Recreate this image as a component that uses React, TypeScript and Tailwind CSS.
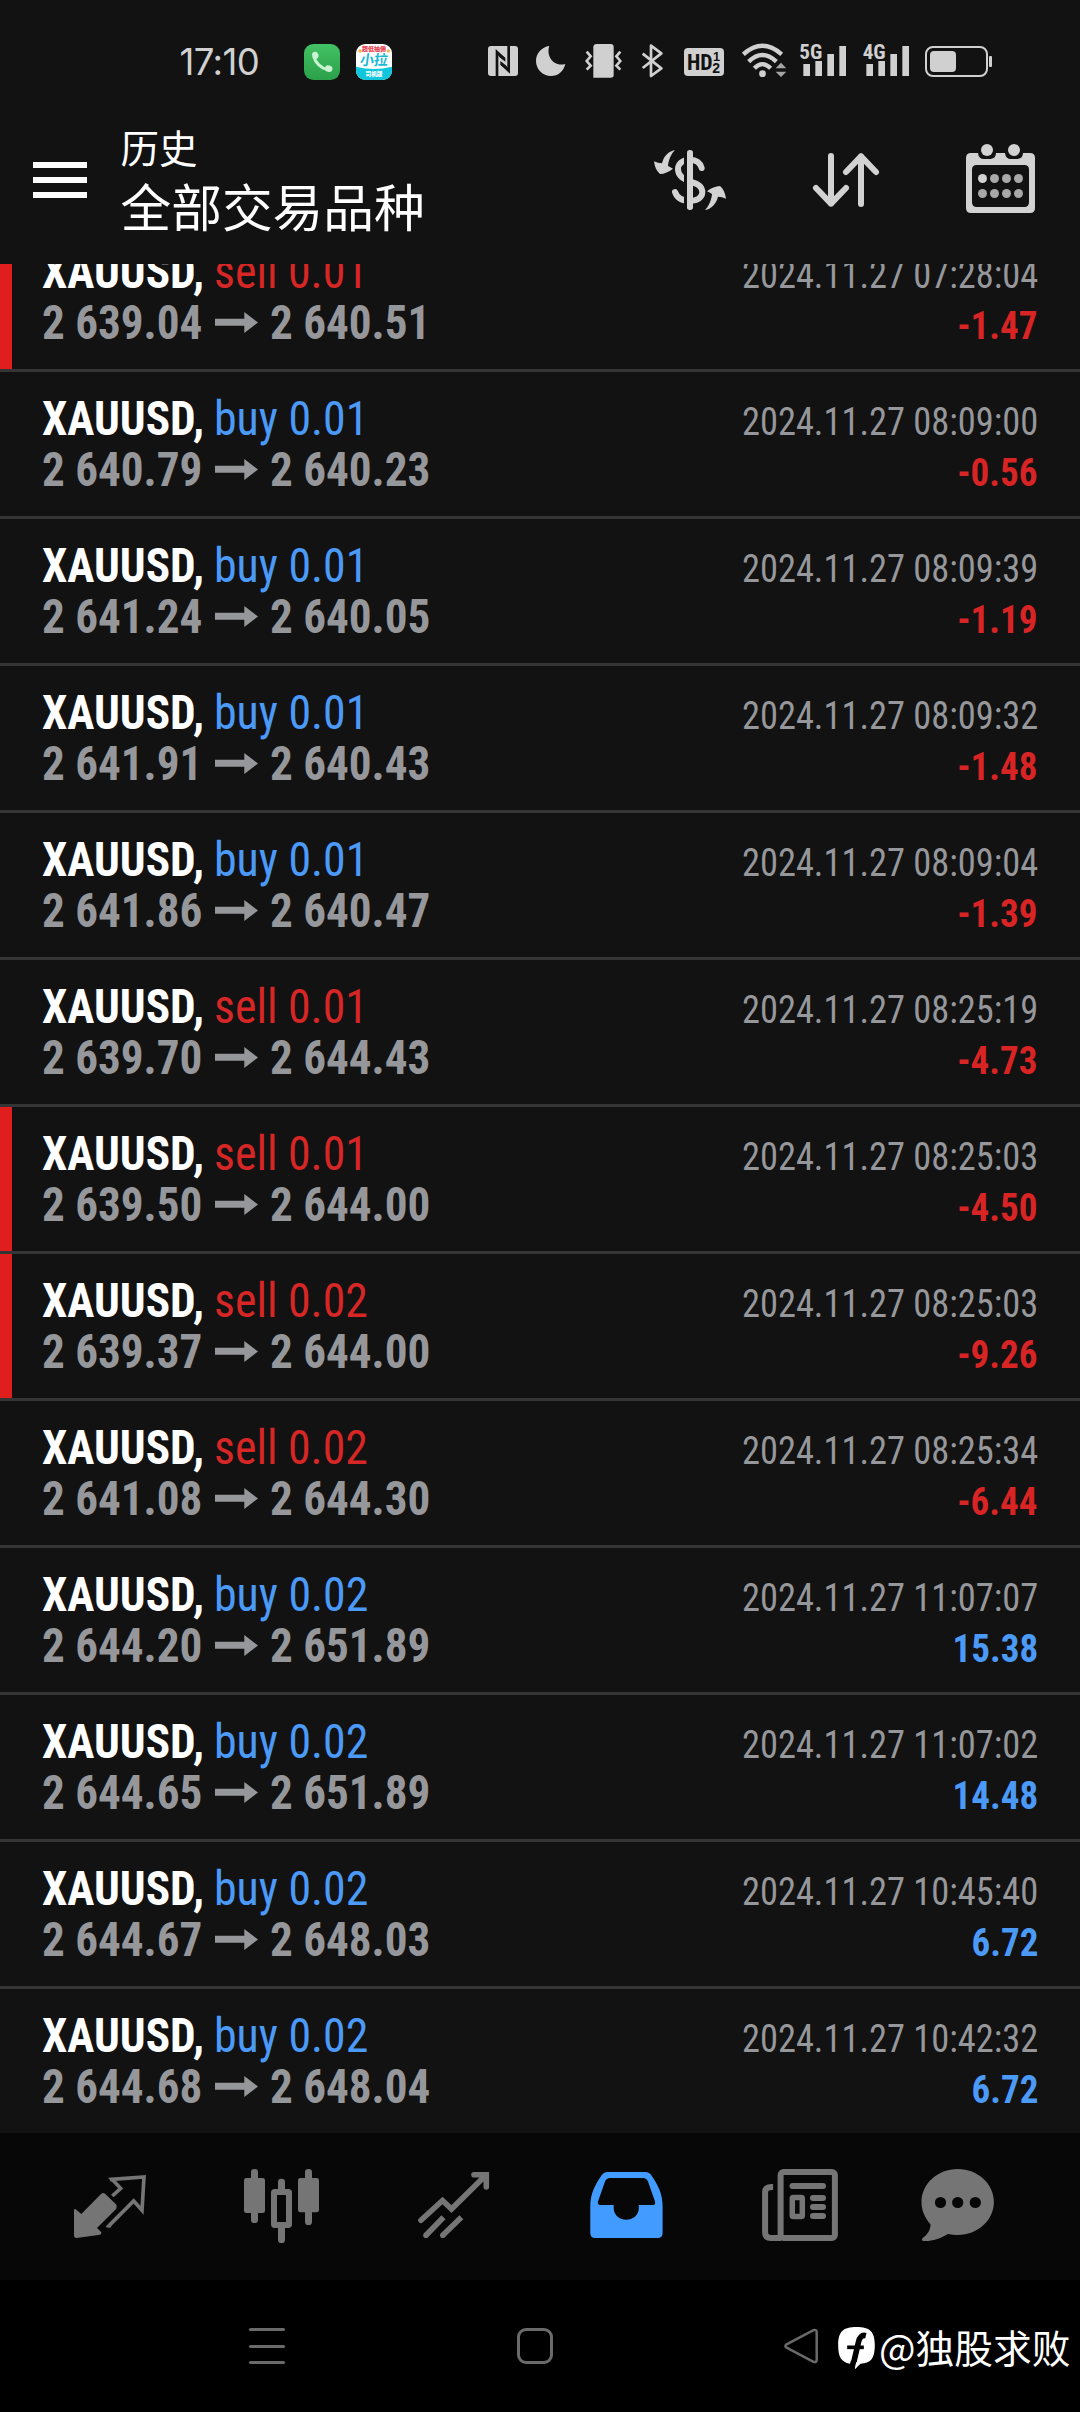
type Side = "buy" | "sell";

interface Deal {
  side: Side;
  lot: string;
  open: string;
  close: string;
  time: string;
  profit: string;
  marked?: boolean;
}

const deals: Deal[] = [
  { side: "sell", lot: "0.01", open: "2 639.04", close: "2 640.51", time: "2024.11.27 07:28:04", profit: "-1.47", marked: true },
  { side: "buy", lot: "0.01", open: "2 640.79", close: "2 640.23", time: "2024.11.27 08:09:00", profit: "-0.56" },
  { side: "buy", lot: "0.01", open: "2 641.24", close: "2 640.05", time: "2024.11.27 08:09:39", profit: "-1.19" },
  { side: "buy", lot: "0.01", open: "2 641.91", close: "2 640.43", time: "2024.11.27 08:09:32", profit: "-1.48" },
  { side: "buy", lot: "0.01", open: "2 641.86", close: "2 640.47", time: "2024.11.27 08:09:04", profit: "-1.39" },
  { side: "sell", lot: "0.01", open: "2 639.70", close: "2 644.43", time: "2024.11.27 08:25:19", profit: "-4.73" },
  { side: "sell", lot: "0.01", open: "2 639.50", close: "2 644.00", time: "2024.11.27 08:25:03", profit: "-4.50", marked: true },
  { side: "sell", lot: "0.02", open: "2 639.37", close: "2 644.00", time: "2024.11.27 08:25:03", profit: "-9.26", marked: true },
  { side: "sell", lot: "0.02", open: "2 641.08", close: "2 644.30", time: "2024.11.27 08:25:34", profit: "-6.44" },
  { side: "buy", lot: "0.02", open: "2 644.20", close: "2 651.89", time: "2024.11.27 11:07:07", profit: "15.38" },
  { side: "buy", lot: "0.02", open: "2 644.65", close: "2 651.89", time: "2024.11.27 11:07:02", profit: "14.48" },
  { side: "buy", lot: "0.02", open: "2 644.67", close: "2 648.03", time: "2024.11.27 10:45:40", profit: "6.72" },
  { side: "buy", lot: "0.02", open: "2 644.68", close: "2 648.04", time: "2024.11.27 10:42:32", profit: "6.72" },
];

function DealRow({ deal }: { deal: Deal }) {
  return (
    <div className="flex h-[147px] shrink-0 border-b-[3px] border-[#353535] font-['Roboto_Condensed','Roboto',sans-serif]">
      <div className={deal.marked ? "w-3 bg-[#e01e1e]" : "w-3"} />
      <div className="flex flex-1 justify-between pl-[29.5px] pr-[42px]">
        <div className="pt-[21px] text-[48px] leading-[51px] whitespace-pre">
          <div className="flex">
            <span className="w-[172px] origin-left scale-x-[0.943] font-bold text-white">XAUUSD,</span>
            <span
              className={
                deal.side === "buy"
                  ? "inline-block origin-left scale-x-[0.955] text-[#4c9af8]"
                  : "inline-block origin-left scale-x-[0.955] text-[#d62626]"
              }
            >
              {deal.side} {deal.lot}
            </span>
          </div>
          <div className="flex items-center font-bold text-[#96979b]">
            <span className="w-[173px] origin-left scale-x-[0.94]">{deal.open}</span>
            <svg className="h-[21px] w-[43px]" viewBox="0 0 43 21" fill="currentColor">
              <path d="M0 6.7H29.3V0L43 10.5 29.3 21V13.7H0z" />
            </svg>
            <span className="ml-3 origin-left scale-x-[0.94]">{deal.close}</span>
          </div>
        </div>
        <div className="flex flex-col items-end pt-[25px] text-[39px] leading-[51px] whitespace-pre">
          <span className="origin-right scale-x-[0.934] text-[#96979b]">{deal.time}</span>
          <span
            className={
              deal.profit.startsWith("-")
                ? "origin-right scale-x-[0.95] font-bold text-[#d82424]"
                : "origin-right scale-x-[0.95] font-bold text-[#4c9af8]"
            }
          >
            {deal.profit}
          </span>
        </div>
      </div>
    </div>
  );
}

function StatusBar() {
  return (
    <div className="flex h-[112px] shrink-0 items-center pt-3 pl-[179.5px] text-[#d0d0d0]">
      <span className="w-[124.5px] font-['Inter',sans-serif] text-[36.5px] leading-[44px] tracking-[-0.6px]">17:10</span>
      {/* phone */}
      <svg className="h-9 w-9" viewBox="0 0 108 108">
        <defs>
          <linearGradient id="call" x1="0" y1="0" x2="0" y2="1">
            <stop offset="0" stopColor="#43c264" />
            <stop offset="1" stopColor="#2ba04a" />
          </linearGradient>
        </defs>
        <rect width="108" height="108" rx="28" fill="url(#call)" />
        <path d="M29 37C34 56 51 73 71 77" fill="none" stroke="#c9f3d2" strokeWidth="9" />
        <ellipse cx="34" cy="34" rx="9.5" ry="11" fill="#c9f3d2" transform="rotate(-15 34 34)" />
        <ellipse cx="74" cy="74" rx="11.5" ry="9.5" fill="#c9f3d2" transform="rotate(15 74 74)" />
      </svg>
      {/* driver app */}
      <svg className="ml-4 h-9 w-9" viewBox="0 0 108 108">
        <clipPath id="app"><rect width="108" height="108" rx="28" /></clipPath>
        <g clipPath="url(#app)" fontFamily="Noto Sans CJK SC, sans-serif" textAnchor="middle">
          <rect width="108" height="108" fill="#fff" />
          <path d="M0 68Q54 82 108 68V108H0z" fill="#10c6dc" />
          <circle cx="12" cy="21" r="5" fill="#f6b34c" />
          <circle cx="97" cy="21" r="5" fill="#f6b34c" />
          <text x="54" y="22" fontSize="18" fontWeight="900" fill="#e8404e">超低抽佣</text>
          <text x="54" y="63" fontSize="42" fontWeight="700" fill="#19b9d2" transform="skewX(-8) translate(7 0)">小拉</text>
          <text x="54" y="97" fontSize="17" fontWeight="900" fill="#fff">司机版</text>
        </g>
      </svg>
      {/* NFC */}
      <svg className="ml-24 h-10 w-[30px]" viewBox="84 36 90 120">
        <rect x="84" y="48" width="90" height="90" rx="9" fill="currentColor" />
        <path d="M111 138V66L133 87M146 48V122L124 101" fill="none" stroke="#121212" strokeWidth="8" />
        <path d="M107 61L136 84V95L118 81M150 127L121 104V93L139 107" fill="#121212" />
      </svg>
      {/* moon */}
      <svg className="ml-[18px] h-10 w-[30px]" viewBox="228 36 90 120" fill="currentColor">
        <path d="M268 48C258 76 279 112 316 102C311 124 294 138 273 138C248 138 228 118 228 93C228 70 245 51 268 48z" />
      </svg>
      {/* vibrate */}
      <svg className="ml-[19px] h-10 w-[37px]" viewBox="375 36 111 120">
        <path d="M411 42H452Q461 42 461 51V135Q461 143 452 143H400V52Q400 42 411 42z" fill="currentColor" />
        <path d="M380 65L392 79 380 93 392 107 380 119M481 65L469 79 481 93 469 107 481 119" fill="none" stroke="currentColor" strokeWidth="8" />
      </svg>
      {/* bluetooth */}
      <svg className="ml-[19px] h-10 w-[22px]" viewBox="543 36 66 120">
        <path d="M548 71L604 115 573 138V47L604 70 548 114" fill="none" stroke="currentColor" strokeWidth="8" strokeLinejoin="round" />
      </svg>
      {/* HD voice */}
      <svg className="ml-[21px] h-10 w-10" viewBox="672 36 120 120">
        <rect x="672" y="54" width="120" height="84" rx="12" fill="currentColor" />
        <g fill="#121212" fontWeight="700">
          <text x="681" y="120" fontSize="67" fontFamily="Roboto Condensed, sans-serif" textLength="77" lengthAdjust="spacingAndGlyphs">HD</text>
          <text x="759" y="92" fontSize="38" fontFamily="Liberation Sans, sans-serif">1</text>
          <text x="757" y="128" fontSize="42" fontFamily="Liberation Sans, sans-serif">2</text>
        </g>
      </svg>
      {/* wifi */}
      <svg className="ml-[18px] h-10 w-11" viewBox="36 36 132 120">
        <g fill="none" stroke="currentColor" strokeWidth="13">
          <path d="M40 73Q97 22 155 73" />
          <path d="M56 95Q97 55 139 95" />
          <path d="M73 115Q97 90 122 115" />
        </g>
        <circle cx="97.500" cy="131" r="10" fill="currentColor" />
        <path d="M153 98L169 115H137zM153 141L169 125H137z" fill="#a5a5a5" />
      </svg>
      {/* signal */}
      <svg className="ml-[14px] h-10 w-[47px]" viewBox="210 36 141 120" fill="currentColor">
        <text x="208" y="87" fontSize="61" fontWeight="700" fontFamily="Roboto Condensed, sans-serif" textLength="69" lengthAdjust="spacingAndGlyphs">5G</text>
        <path d="M220 102h20v36h-20zM256 93h20v45h-20zM292 72h20v66h-20zM328 48h20v90h-20z" />
      </svg>
      <svg className="ml-[15px] h-10 w-12" viewBox="396 36 144 120" fill="currentColor">
        <text x="398" y="87" fontSize="61" fontWeight="700" fontFamily="Roboto Condensed, sans-serif" textLength="69" lengthAdjust="spacingAndGlyphs">4G</text>
        <path d="M409 102h20v36h-20zM445 93h20v45h-20zM481 72h20v66h-20zM517 48h20v90h-20z" />
      </svg>
      {/* battery */}
      <svg className="ml-[14px] h-10 w-[69px]" viewBox="582 36 207 120">
        <rect x="588" y="51" width="183" height="87" rx="21" fill="none" stroke="currentColor" strokeWidth="6" />
        <rect x="600" y="63" width="78" height="63" rx="12" fill="currentColor" />
        <rect x="777" y="78" width="9" height="33" rx="3" fill="currentColor" />
      </svg>
    </div>
  );
}

function Header() {
  return (
    <div className="flex h-[152px] shrink-0 items-center pb-4 pl-[33px] text-[#d2d2d2]">
      <div className="flex w-[54px] flex-col gap-[9px]">
        <div className="h-1.5 bg-white" />
        <div className="h-1.5 bg-white" />
        <div className="h-1.5 bg-white" />
      </div>
      <div className="ml-[33.500px] flex w-[521.5px] flex-col gap-[5px] pb-[3px] font-['Noto_Sans_CJK_SC',sans-serif] text-white">
        <span className="text-[38.5px] leading-[48px]">历史</span>
        <span className="text-[50.7px] leading-[60px]">全部交易品种</span>
      </div>
      <svg className="size-24" viewBox="6 6 288 288">
        <path
          d="M185 114C180 96 166 89 150 89C128 89 114 101 114 118C114 139 132 147 150 154C174 162 187 169 187 187C187 203 170 213 150 213C125 213 111 203 105 186"
          fill="none"
          stroke="currentColor"
          strokeWidth="18"
          strokeLinecap="round"
        />
        <path d="M132 70H142V230H132z" fill="#121212" />
        <rect x="141" y="60" width="18" height="180" rx="8" fill="currentColor" />
        <g fill="currentColor">
          <path d="M105 60C84 64 71 80 66 100Q54 100 42 94C44 111 50 124 60 132Q80 131 99 116Q91 112 84 108C86 88 94 71 105 60z" />
          <path d="M195 240C216 236 229 220 234 200Q246 200 258 206C256 189 250 176 240 168Q220 169 201 184Q209 188 216 192C214 212 206 229 195 240z" />
        </g>
      </svg>
      <svg className="ml-[60px] size-24" viewBox="594 66 288 288" fill="none" stroke="currentColor" strokeWidth="18" strokeLinecap="round" strokeLinejoin="round">
        <path d="M693 138V281M648 234L693 281 738 234M783 282V139M738 186L783 139 828 186" />
      </svg>
      <svg className="ml-[58px] size-24" viewBox="1056 66 288 288" fill="currentColor">
        <path
          fillRule="evenodd"
          d="M1113 129H1134Q1136 147 1152 147H1172Q1188 145 1188 129H1215Q1217 147 1233 147H1253Q1269 145 1269 129H1290Q1305 129 1305 144V294Q1305 309 1290 309H1113Q1098 309 1098 294V144Q1098 129 1113 129zM1130 165Q1116 165 1116 179V277Q1116 291 1130 291H1273Q1287 291 1287 277V179Q1287 165 1273 165z"
        />
        <circle cx="1161" cy="120" r="18" />
        <circle cx="1242" cy="120" r="18" />
        <circle cx="1147.500" cy="205.500" r="13.500" />
        <g fill="#a8a8a8">
          <circle cx="1183.500" cy="205.500" r="13.500" />
          <circle cx="1219.500" cy="205.500" r="13.500" />
          <circle cx="1255.500" cy="205.500" r="13.500" />
          <circle cx="1147.500" cy="250.500" r="13.500" />
          <circle cx="1183.500" cy="250.500" r="13.500" />
          <circle cx="1219.500" cy="250.500" r="13.500" />
          <circle cx="1255.500" cy="250.500" r="13.500" />
        </g>
      </svg>
    </div>
  );
}

function TabBar() {
  return (
    <div className="flex h-[147px] shrink-0 items-center gap-[76px] bg-[#070707] pb-px pl-[62px] text-[#757575]">
      {/* quotes */}
      <svg className="size-24 shrink-0" viewBox="6 24 288 288">
        <path d="M42 180Q43 176 47 178L64 192 123 132Q129 127 135 131L168 163Q173 170 169 176L111 234 124 247Q125 252 120 254L50 264Q42 264 42 256z" fill="currentColor" />
        <path
          d="M157 138L182 115 156 88 252 81 246 181 221 153 148 226"
          fill="none"
          stroke="currentColor"
          strokeWidth="11"
        />
        <circle cx="155" cy="89" r="5.500" fill="currentColor" />
        <path d="M137 231L144 222 155 231Q147 235 137 231z" fill="currentColor" />
      </svg>
      {/* chart */}
      <svg className="size-24 shrink-0" viewBox="522 24 288 288" fill="currentColor">
        <rect x="573" y="57" width="21" height="162" rx="10" />
        <rect x="552" y="84" width="63" height="105" rx="7" />
        <rect x="735" y="57" width="21" height="168" rx="10" />
        <rect x="714" y="84" width="63" height="103" rx="7" />
        <rect x="654" y="86" width="21" height="40" rx="10" />
        <rect x="654" y="225" width="21" height="54" rx="10" />
        <rect x="642" y="126" width="45" height="99" rx="2" fill="none" stroke="currentColor" strokeWidth="18" strokeLinejoin="round" />
      </svg>
      {/* trade */}
      <svg className="size-24 shrink-0" viewBox="0 0 96 96" fill="none" stroke="currentColor" strokeWidth="5.600">
        <path d="M15 62.300L36.500 42.500 45.500 51 79.500 17.500M68 16.800H80.300V29" strokeLinecap="round" strokeLinejoin="miter" />
        <path d="M20 77.300L37.500 59.300M36.800 77.300L55.400 59.300" />
        <g fill="currentColor" stroke="none">
          <circle cx="20" cy="77.300" r="2.800" />
          <circle cx="36.800" cy="77.300" r="2.800" />
        </g>
      </svg>
      {/* history */}
      <svg className="size-24 shrink-0" viewBox="0 0 96 96" fill="#429cff">
        <path
          fillRule="evenodd"
          d="M29.500 14H67.500Q71.500 14 73.500 17.500C80 27 84.600 36 84.600 48V75Q84.600 80 79.600 80H17.300Q12.300 80 12.300 75V48C12.300 36 17 27 23.500 17.500Q25.500 14 29.500 14zM32 20Q28.500 20 27 23.500L20 43.500Q19.200 47 22.500 47H35.700V50C35.700 65.500 60.800 65.500 60.800 50V47H74.500Q78 47 77 43.500L70 23.500Q68.500 20 65 20z"
        />
      </svg>
      {/* news */}
      <svg className="size-24 shrink-0" viewBox="0 0 96 96" fill="none" stroke="currentColor" strokeWidth="6">
        <rect x="30.600" y="14" width="54.300" height="66" rx="3" />
        <path d="M23.100 29H22Q15.100 29 15.100 34V74Q15.100 80 21 80H31" />
        <rect x="42.300" y="39.500" width="10" height="19" rx="1" strokeWidth="5.500" />
        <path d="M42.500 28H73M63 40H73M63 49H73M63 58H73" strokeLinecap="round" />
      </svg>
      {/* messages */}
      <svg className="-ml-3 size-24 shrink-0" viewBox="-12 0 96 96">
        <path
          d="M35.700 11C55.700 11 71.900 25.800 71.900 44C71.900 62.200 55.700 77 35.700 77Q30.500 77 26 76C18 81 9 83.500 2 83Q-1.500 82.500 0.800 80C6 76 8.500 72 8.500 66.300C3 60 -0.500 52.500 -0.500 44C-0.500 25.800 15.700 11 35.700 11z"
          fill="currentColor"
        />
        <g fill="#070707">
          <circle cx="18.500" cy="44.500" r="5.600" />
          <circle cx="35.700" cy="44.500" r="5.600" />
          <circle cx="53.300" cy="44.500" r="5.600" />
        </g>
      </svg>
    </div>
  );
}

function SystemNav() {
  return (
    <div className="flex h-[132px] shrink-0 items-center bg-black pl-[249px] text-[#6a6a6a]">
      <div className="flex h-9 w-9 flex-col justify-between">
        <div className="h-[3px] rounded-full bg-[#6a6a6a]" />
        <div className="h-[3px] rounded-full bg-[#6a6a6a]" />
        <div className="h-[3px] rounded-full bg-[#6a6a6a]" />
      </div>
      <div className="ml-[232px] size-9 rounded-[9px] border-[3px] border-[#6a6a6a]" />
      <svg className="ml-[231px] h-9 w-[34px]" viewBox="0 0 34 36" fill="none" stroke="currentColor" strokeWidth="2.500" strokeLinejoin="round">
        <path d="M29.500 2.200Q32.700 1 32.700 4.500V31.500Q32.700 35 29.500 33.800L2.600 19.700Q0.200 18 2.600 16.300z" />
      </svg>
      <div className="ml-5 flex items-center text-white">
        <svg className="mt-1 h-[42px] w-[37px]" viewBox="55 37 110 126">
          <path d="M110 37C150 37 165 50 165 92C165 132 152 147 122 147Q113 153 106 163L100 147H90C65 143 55 128 55 92C55 50 70 37 110 37z" fill="#fff" />
          <path d="M138 63C126 60 119 68 116 82L101 146" fill="none" stroke="#000" strokeWidth="17" />
          <path d="M82 98H132" stroke="#000" strokeWidth="11" />
          <path d="M90 150L93 138H110L105 163z" fill="#000" />
          <path d="M106 163L109 142 122 147Q113 153 106 163z" fill="#fff" />
        </svg>
        <span className="ml-1 font-['Noto_Sans_CJK_SC',sans-serif] text-[38.7px] leading-10 whitespace-nowrap">@独股求败</span>
      </div>
    </div>
  );
}

export default function App() {
  return (
    <div className="flex h-[2412px] w-[1080px] flex-col overflow-hidden bg-[#121212]">
      <StatusBar />
      <Header />
      <div className="flex h-[1869px] shrink-0 flex-col overflow-hidden">
        <div className="-mt-[39px] flex flex-col">
          {deals.map((deal, i) => (
            <DealRow key={i} deal={deal} />
          ))}
        </div>
      </div>
      <TabBar />
      <SystemNav />
    </div>
  );
}
